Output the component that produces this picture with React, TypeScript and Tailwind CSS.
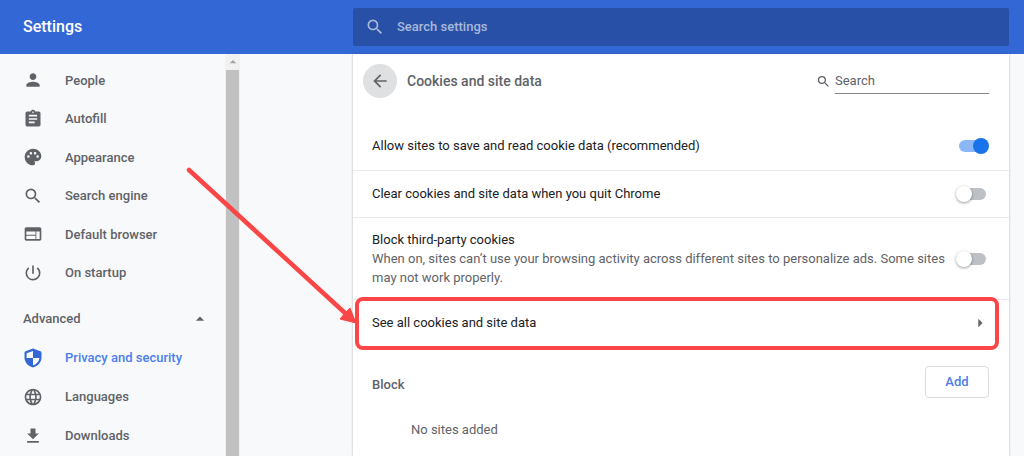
import type { ReactNode } from "react";
import type { IconType } from "react-icons";
import {
  MdArrowBack,
  MdArrowDropUp,
  MdArrowRight,
  MdAssignment,
  MdFileDownload,
  MdLanguage,
  MdPalette,
  MdPerson,
  MdPowerSettingsNew,
  MdSearch,
  MdWeb,
} from "react-icons/md";

function ShieldIcon({ className }: { className?: string }) {
  return (
    <svg viewBox="0 0 20 20" fill="currentColor" className={className}>
      <path
        fillRule="evenodd"
        d="M10 .5 2.6 3.2Q1.5 3.6 1.5 4.8V9.600c0 4.600 3.400 8.600 8.500 10 5.100-1.400 8.500-5.400 8.500-10V4.800q0-1.200-1.100-1.600L10 .5zm0 2.400V10h6.400c-.3 3.500-2.800 6.200-6.400 7.400V10H3.600V5.200L10 2.900z"
      />
    </svg>
  );
}

type NavItem = { label: string; icon: IconType | typeof ShieldIcon; active?: boolean };

const basicItems: NavItem[] = [
  { label: "People", icon: MdPerson },
  { label: "Autofill", icon: MdAssignment },
  { label: "Appearance", icon: MdPalette },
  { label: "Search engine", icon: MdSearch },
  { label: "Default browser", icon: MdWeb },
  { label: "On startup", icon: MdPowerSettingsNew },
];

const advancedItems: NavItem[] = [
  { label: "Privacy and security", icon: ShieldIcon, active: true },
  { label: "Languages", icon: MdLanguage },
  { label: "Downloads", icon: MdFileDownload },
];

function NavLink({ label, icon: Icon, active }: NavItem) {
  return (
    <li className="flex">
      <a
        href="#"
        className={
          active
            ? "flex flex-1 items-center gap-[22px] pl-[23px] text-[#3367d6]"
            : "flex flex-1 items-center gap-[22px] pl-[23px] text-[#5f6368]"
        }
      >
        <Icon className="size-5" />
        <span className={active ? "text-[#4a7fee]" : ""}>{label}</span>
      </a>
    </li>
  );
}

function Toggle({ id, defaultChecked }: { id: string; defaultChecked?: boolean }) {
  return (
    <input
      id={id}
      type="checkbox"
      role="switch"
      defaultChecked={defaultChecked}
      className="relative mr-[3px] h-3 w-[27px] shrink-0 appearance-none rounded-full bg-[#bdc1c6] before:absolute before:-top-0.5 before:-left-[3px] before:size-4 before:rounded-full before:bg-white before:shadow-[0_1px_3px_rgba(0,0,0,0.4)] checked:bg-[#8cb7f7] checked:before:left-[14px] checked:before:bg-[#1a73e8] checked:before:shadow-none"
    />
  );
}

function Row({ className, children }: { className: string; children: ReactNode }) {
  return (
    <div className={`flex items-center justify-between pr-5 pl-[19px] ${className}`}>
      {children}
    </div>
  );
}

export default function App() {
  return (
    <div className="relative flex h-screen flex-col overflow-hidden bg-[#f8f9fa] font-['Roboto',sans-serif] text-[13px] text-[#202124]">
      <header className="flex h-[54px] shrink-0 items-center bg-[#3367d6] pr-[15px]">
        <h1 className="w-[353px] shrink-0 pl-[23px] text-base font-medium text-white">Settings</h1>
        <label className="flex h-[38px] flex-1 items-center gap-3 rounded-xs bg-[#2850a7] pl-3 text-[#a9b9dc]">
          <MdSearch className="size-5" />
          <input
            type="search"
            aria-label="Search settings"
            placeholder="Search settings"
            className="flex-1 font-medium outline-none placeholder:text-[#a9b9dc]"
          />
        </label>
      </header>

      <div className="flex min-h-0 flex-1">
        <aside className="flex w-60 shrink-0 overflow-hidden font-medium">
          <nav className="flex-1 pt-[7px]">
            <ul className="grid h-[231px] auto-rows-fr">
              {basicItems.map((item) => (
                <NavLink key={item.label} {...item} />
              ))}
            </ul>
            <button className="mt-2 flex h-[38px] w-full items-center justify-between pr-[15px] pl-[23px] text-[#5f6368]">
              Advanced
              <MdArrowDropUp className="size-5" />
            </button>
            <ul className="grid auto-rows-[39px]">
              {advancedItems.map((item) => (
                <NavLink key={item.label} {...item} />
              ))}
            </ul>
          </nav>
          <div className="flex w-[15px] flex-col bg-[#f1f1f1] px-px">
            <div className="flex h-4 items-center justify-center text-[#a3a3a3]">
              <MdArrowDropUp className="size-4 shrink-0" />
            </div>
            <div className="flex-1 bg-[#c1c1c1]" />
          </div>
        </aside>

        <main className="mr-[15px] ml-[113px] flex-1 bg-white shadow-[0_0_2px_rgba(60,64,67,0.4)]">
          <div className="flex h-[54px] items-center pr-5 pl-2.5">
            <button
              aria-label="Back"
              className="flex size-[34px] items-center justify-center rounded-full bg-[#dfe0e1] text-[#5f6368]"
            >
              <MdArrowBack className="size-5" />
            </button>
            <h2 className="ml-2.5 flex-1 text-sm font-medium text-[#5f6368]">Cookies and site data</h2>
            <label className="flex items-center gap-1 text-[#5f6368]">
              <MdSearch className="size-[15px]" />
              <input
                type="search"
                aria-label="Search"
                placeholder="Search"
                className="h-[26px] w-[154px] border-b border-[#80868b] outline-none placeholder:text-[#5f6368]"
              />
            </label>
          </div>

          <Row className="mt-[14px] h-12">
            <label htmlFor="allow">Allow sites to save and read cookie data (recommended)</label>
            <Toggle id="allow" defaultChecked />
          </Row>
          <Row className="h-[47px] border-t border-[#e8eaed]">
            <label htmlFor="clear">Clear cookies and site data when you quit Chrome</label>
            <Toggle id="clear" />
          </Row>
          <Row className="h-[82px] border-t border-[#e8eaed]">
            <label htmlFor="block" className="max-w-[580px] leading-[19px]">
              Block third-party cookies
              <span className="block text-[#5f6368]">
                When on, sites can’t use your browsing activity across different sites to personalize
                ads. Some sites may not work properly.
              </span>
            </label>
            <Toggle id="block" />
          </Row>
          <div className="relative border-t border-[#e8eaed]">
            <button className="flex h-[46px] w-full items-center justify-between pr-[19px] pl-[19px]">
              See all cookies and site data
              <MdArrowRight className="size-5 text-[#5f6368]" />
            </button>
            <div className="pointer-events-none absolute -top-[3px] right-2.5 -bottom-1 left-0.5 rounded-lg border-4 border-[#fb4648]" />
          </div>
          <Row className="mt-5 h-8">
            <h3 className="pt-1.5 font-medium text-[#5f6368]">Block</h3>
            <button className="h-8 w-16 rounded-sm border border-[#dadce0] font-medium text-[#4a7fee]">
              Add
            </button>
          </Row>
          <p className="mt-[22px] pl-[58px] text-[#5f6368]">No sites added</p>
        </main>
      </div>

      <svg
        viewBox="0 0 172 158"
        className="pointer-events-none absolute top-[167px] left-[186px] h-[158px] w-[172px]"
      >
        <path d="M3 3 159 146" stroke="#fb4648" strokeWidth="4.5" strokeLinecap="round" />
        <path d="M170 156 164 141 159 146 154 152z" fill="#fb4648" stroke="#fb4648" />
      </svg>
    </div>
  );
}
